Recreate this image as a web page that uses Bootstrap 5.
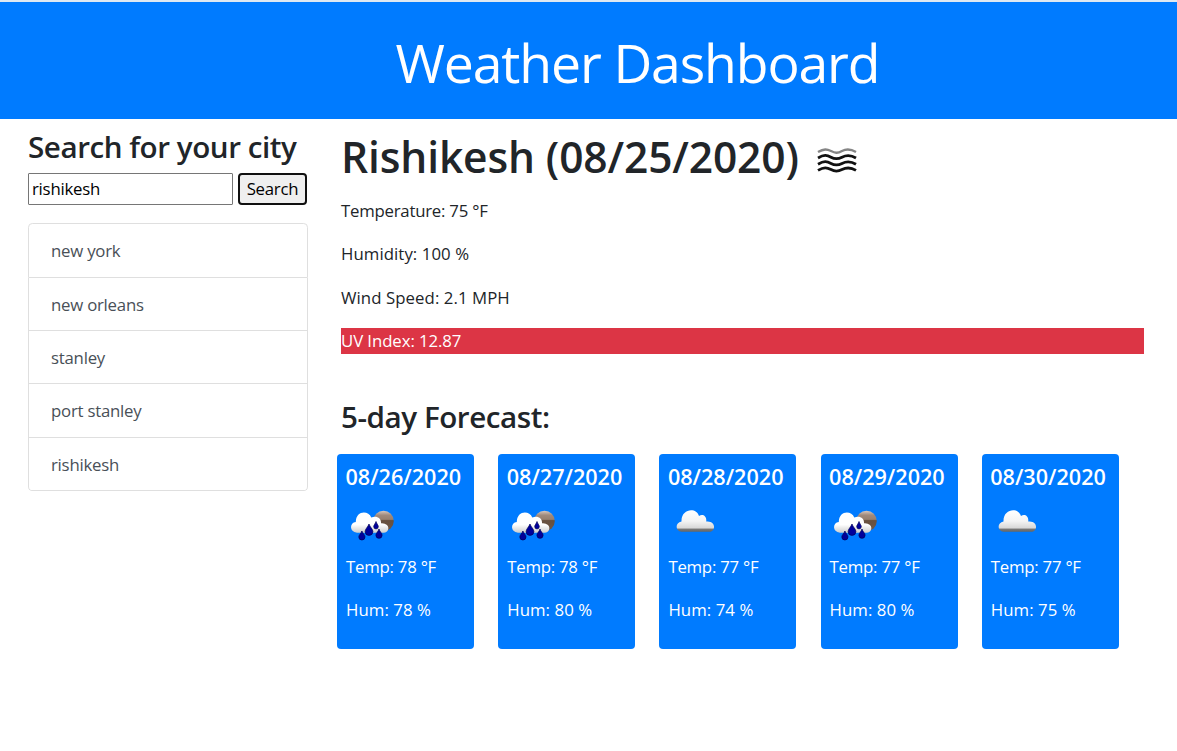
<!DOCTYPE html>
<html lang="en">
<head>
<meta charset="utf-8">
<meta name="viewport" content="width=device-width, initial-scale=1">
<title>Weather Dashboard</title>
<link href="https://cdn.jsdelivr.net/npm/bootstrap@5.3.0/dist/css/bootstrap.min.css" rel="stylesheet">
<style>
html { font-size: 17.4px; }
body { font-family: "Open Sans", "Noto Sans", sans-serif; font-size: 16.8px; line-height: 26.1px; color: #212529; letter-spacing: -.014em; overflow: hidden; }
h1, h2, h3, h5 { font-weight: 600; margin: 0; white-space: nowrap; }
p { margin: 0 0 17.4px; white-space: nowrap; }
.hero { height: 119px; background: #007bff; border-top: 2px solid #dee8f2; padding-left: 98px; }
.hero-title { font-size: 53.5px; font-weight: 400; line-height: 66px; letter-spacing: -.021em; padding-top: 28px; }
.side { width: 280px; margin-left: 28px; padding-top: 10px; }
.section-title { font-size: 29.6px; line-height: 36px; letter-spacing: -.015em; }
.search-row { gap: 5px; margin-top: 8px; height: 32px; }
.search-input { width: 205px; border: 1px solid #767676; padding: 1px 3px 0; border-radius: 1px; color: #000; letter-spacing: inherit; }
.search-btn { width: 69px; border: 2px solid #101010; border-radius: 4px; background: #efefef; color: #000; padding: 1px 0 0; letter-spacing: inherit; }
.cities { margin-top: 18px; --bs-list-group-border-color: #dfdfdf; --bs-list-group-border-radius: 4.35px; }
.cities .list-group-item { height: 53.3px; padding: 13.8px 22px 12px; line-height: 26.1px; color: #495057; }
.cities .list-group-item:first-child { height: 54.9px; }
.content { width: 803px; margin-left: 33px; padding-top: 12px; }
.city-name { width: 469px; font-size: 42.5px; line-height: 52px; letter-spacing: -.003em; }
.readings { padding-top: 13px; }
.airy { letter-spacing: .004em; }
.uv { background: linear-gradient(#dc3545, #dc3545) 0 -1px no-repeat; color: #fff; letter-spacing: -.005em; }
.forecast-title { margin-top: 44.7px; }
.days { gap: 24.2px; margin: 18.5px 0 0 -4px; }
.day { width: 137px; height: 195px; flex: none; background: #007bff; color: #fff; border: 0; border-radius: 4px; padding: 10px 9px 0; }
.day h5 { font-size: 21.6px; line-height: 26px; letter-spacing: 0; margin-left: -.5px; }
.day svg { display: block; width: 54px; height: 54px; margin: 4.5px 0 5.5px -.3px; }
</style>
</head>
<body>
<svg width="0" height="0" class="position-absolute">
  <defs>
    <linearGradient id="cloudFill" x1="0" y1="0" x2="0" y2="1"><stop offset="0" stop-color="#fff"/><stop offset=".5" stop-color="#f4f4f4"/><stop offset=".82" stop-color="#d8d8d8"/><stop offset=".88" stop-color="#777"/><stop offset="1" stop-color="#666"/></linearGradient>
    <linearGradient id="rainFill" x1="0" y1="0" x2="0" y2="1"><stop offset="0" stop-color="#fff"/><stop offset=".6" stop-color="#fff"/><stop offset="1" stop-color="#ccc"/></linearGradient>
    <linearGradient id="moonFill" x1="0" y1="0" x2="0" y2="1"><stop offset="0" stop-color="#d8c8bf"/><stop offset=".22" stop-color="#a08a7c"/><stop offset=".42" stop-color="#97806f"/><stop offset=".48" stop-color="#67503f"/><stop offset="1" stop-color="#6f5848"/></linearGradient>
    <symbol id="cloud" viewBox="0 0 54 54">
      <path fill="url(#cloudFill)" d="M13.500 37.800C7 37 7 28.500 13.500 27.500C13 14.500 28.500 13 31 22C35 19.500 39 22.500 38.200 27.600C47.500 26.500 48 36.500 42.500 37.800Z"/>
    </symbol>
    <symbol id="rain" viewBox="0 0 54 54">
      <circle cx="37.500" cy="27" r="10.300" fill="url(#moonFill)"/>
      <path fill="url(#rainFill)" d="M11 38.800C3 38 3.500 28.500 9.800 28C9.800 16.500 22.300 16 25.300 23.500C30.500 21.500 35.500 24 35 29.300C44 28.500 44.500 38.200 38 38.800Z"/>
      <g fill="#00009b" stroke="#000058" stroke-width=".7">
        <path d="M23 30C23.800 33 26.900 35 26.900 37.500A3.900 3.900 0 0 1 19.100 37.500C19.100 35 22 33 23 30Z"/>
        <path d="M30 27.500C30.500 29.500 32.300 31 32.300 32.600A2.300 2.300 0 0 1 27.700 32.600C27.700 31 29.500 29.500 30 27.500Z"/>
        <path d="M15.900 37C16.700 39.500 19 41 19 42.900A3.100 3.100 0 0 1 12.800 42.900C12.800 41 15.200 39.500 15.900 37Z"/>
        <path d="M33 35C33.600 37.800 36.100 39 36.100 41.200A3.100 3.100 0 0 1 29.900 41.200C29.900 39 32.300 37.800 33 35Z"/>
      </g>
    </symbol>
  </defs>
</svg>
<header class="hero text-white text-center"><h1 class="hero-title">Weather Dashboard</h1></header>
<div class="d-flex">
  <aside class="side flex-shrink-0">
    <h3 class="section-title">Search for your city</h3>
    <div class="search-row d-flex">
      <input class="search-input" type="text" value="rishikesh" aria-label="City">
      <button class="search-btn" type="button">Search</button>
    </div>
    <ul class="cities list-group">
      <li class="list-group-item">new york</li>
      <li class="list-group-item">new orleans</li>
      <li class="list-group-item">stanley</li>
      <li class="list-group-item">port stanley</li>
      <li class="list-group-item">rishikesh</li>
    </ul>
  </aside>
  <main class="content flex-shrink-0">
    <div class="d-flex">
      <h2 class="city-name">Rishikesh (08/25/2020)</h2>
      <svg width="54" height="54" viewBox="0 1 54 54" fill="none" stroke="#111" stroke-width="2.800">
        <path stroke="#858585" stroke-width="2.400" d="M8 22C14 18.500 17 19 21 21S27.500 23.500 32 21S41 19 46 22"/>
        <path d="M8 28C14 24.500 17 25 21 27.200S27.500 29.500 32 27.200S41 25 46 28"/>
        <path d="M8 34.200C14 30.700 17 31.200 21 33.400S27.500 35.700 32 33.400S41 31.200 46 34.200"/>
        <path d="M8 40.400C14 36.900 17 37.400 21 39.600S27.500 41.900 32 39.600S41 37.400 46 40.400"/>
      </svg>
    </div>
    <div class="readings">
      <p>Temperature: 75 °F</p>
      <p class="airy">Humidity: 100 %</p>
      <p class="airy">Wind Speed: 2.1 MPH</p>
      <p class="uv mb-0">UV Index: 12.87</p>
    </div>
    <h3 class="section-title forecast-title">5-day Forecast:</h3>
    <div class="days d-flex">
      <div class="card day"><h5>08/26/2020</h5><svg><use href="#rain"/></svg><p>Temp: 78 °F</p><p class="airy">Hum: 78 %</p></div>
      <div class="card day"><h5>08/27/2020</h5><svg><use href="#rain"/></svg><p>Temp: 78 °F</p><p class="airy">Hum: 80 %</p></div>
      <div class="card day"><h5>08/28/2020</h5><svg><use href="#cloud"/></svg><p>Temp: 77 °F</p><p class="airy">Hum: 74 %</p></div>
      <div class="card day"><h5>08/29/2020</h5><svg><use href="#rain"/></svg><p>Temp: 77 °F</p><p class="airy">Hum: 80 %</p></div>
      <div class="card day"><h5>08/30/2020</h5><svg><use href="#cloud"/></svg><p>Temp: 77 °F</p><p class="airy">Hum: 75 %</p></div>
    </div>
  </main>
</div>
<script src="https://cdn.jsdelivr.net/npm/bootstrap@5.3.0/dist/js/bootstrap.bundle.min.js"></script>
</body>
</html>
